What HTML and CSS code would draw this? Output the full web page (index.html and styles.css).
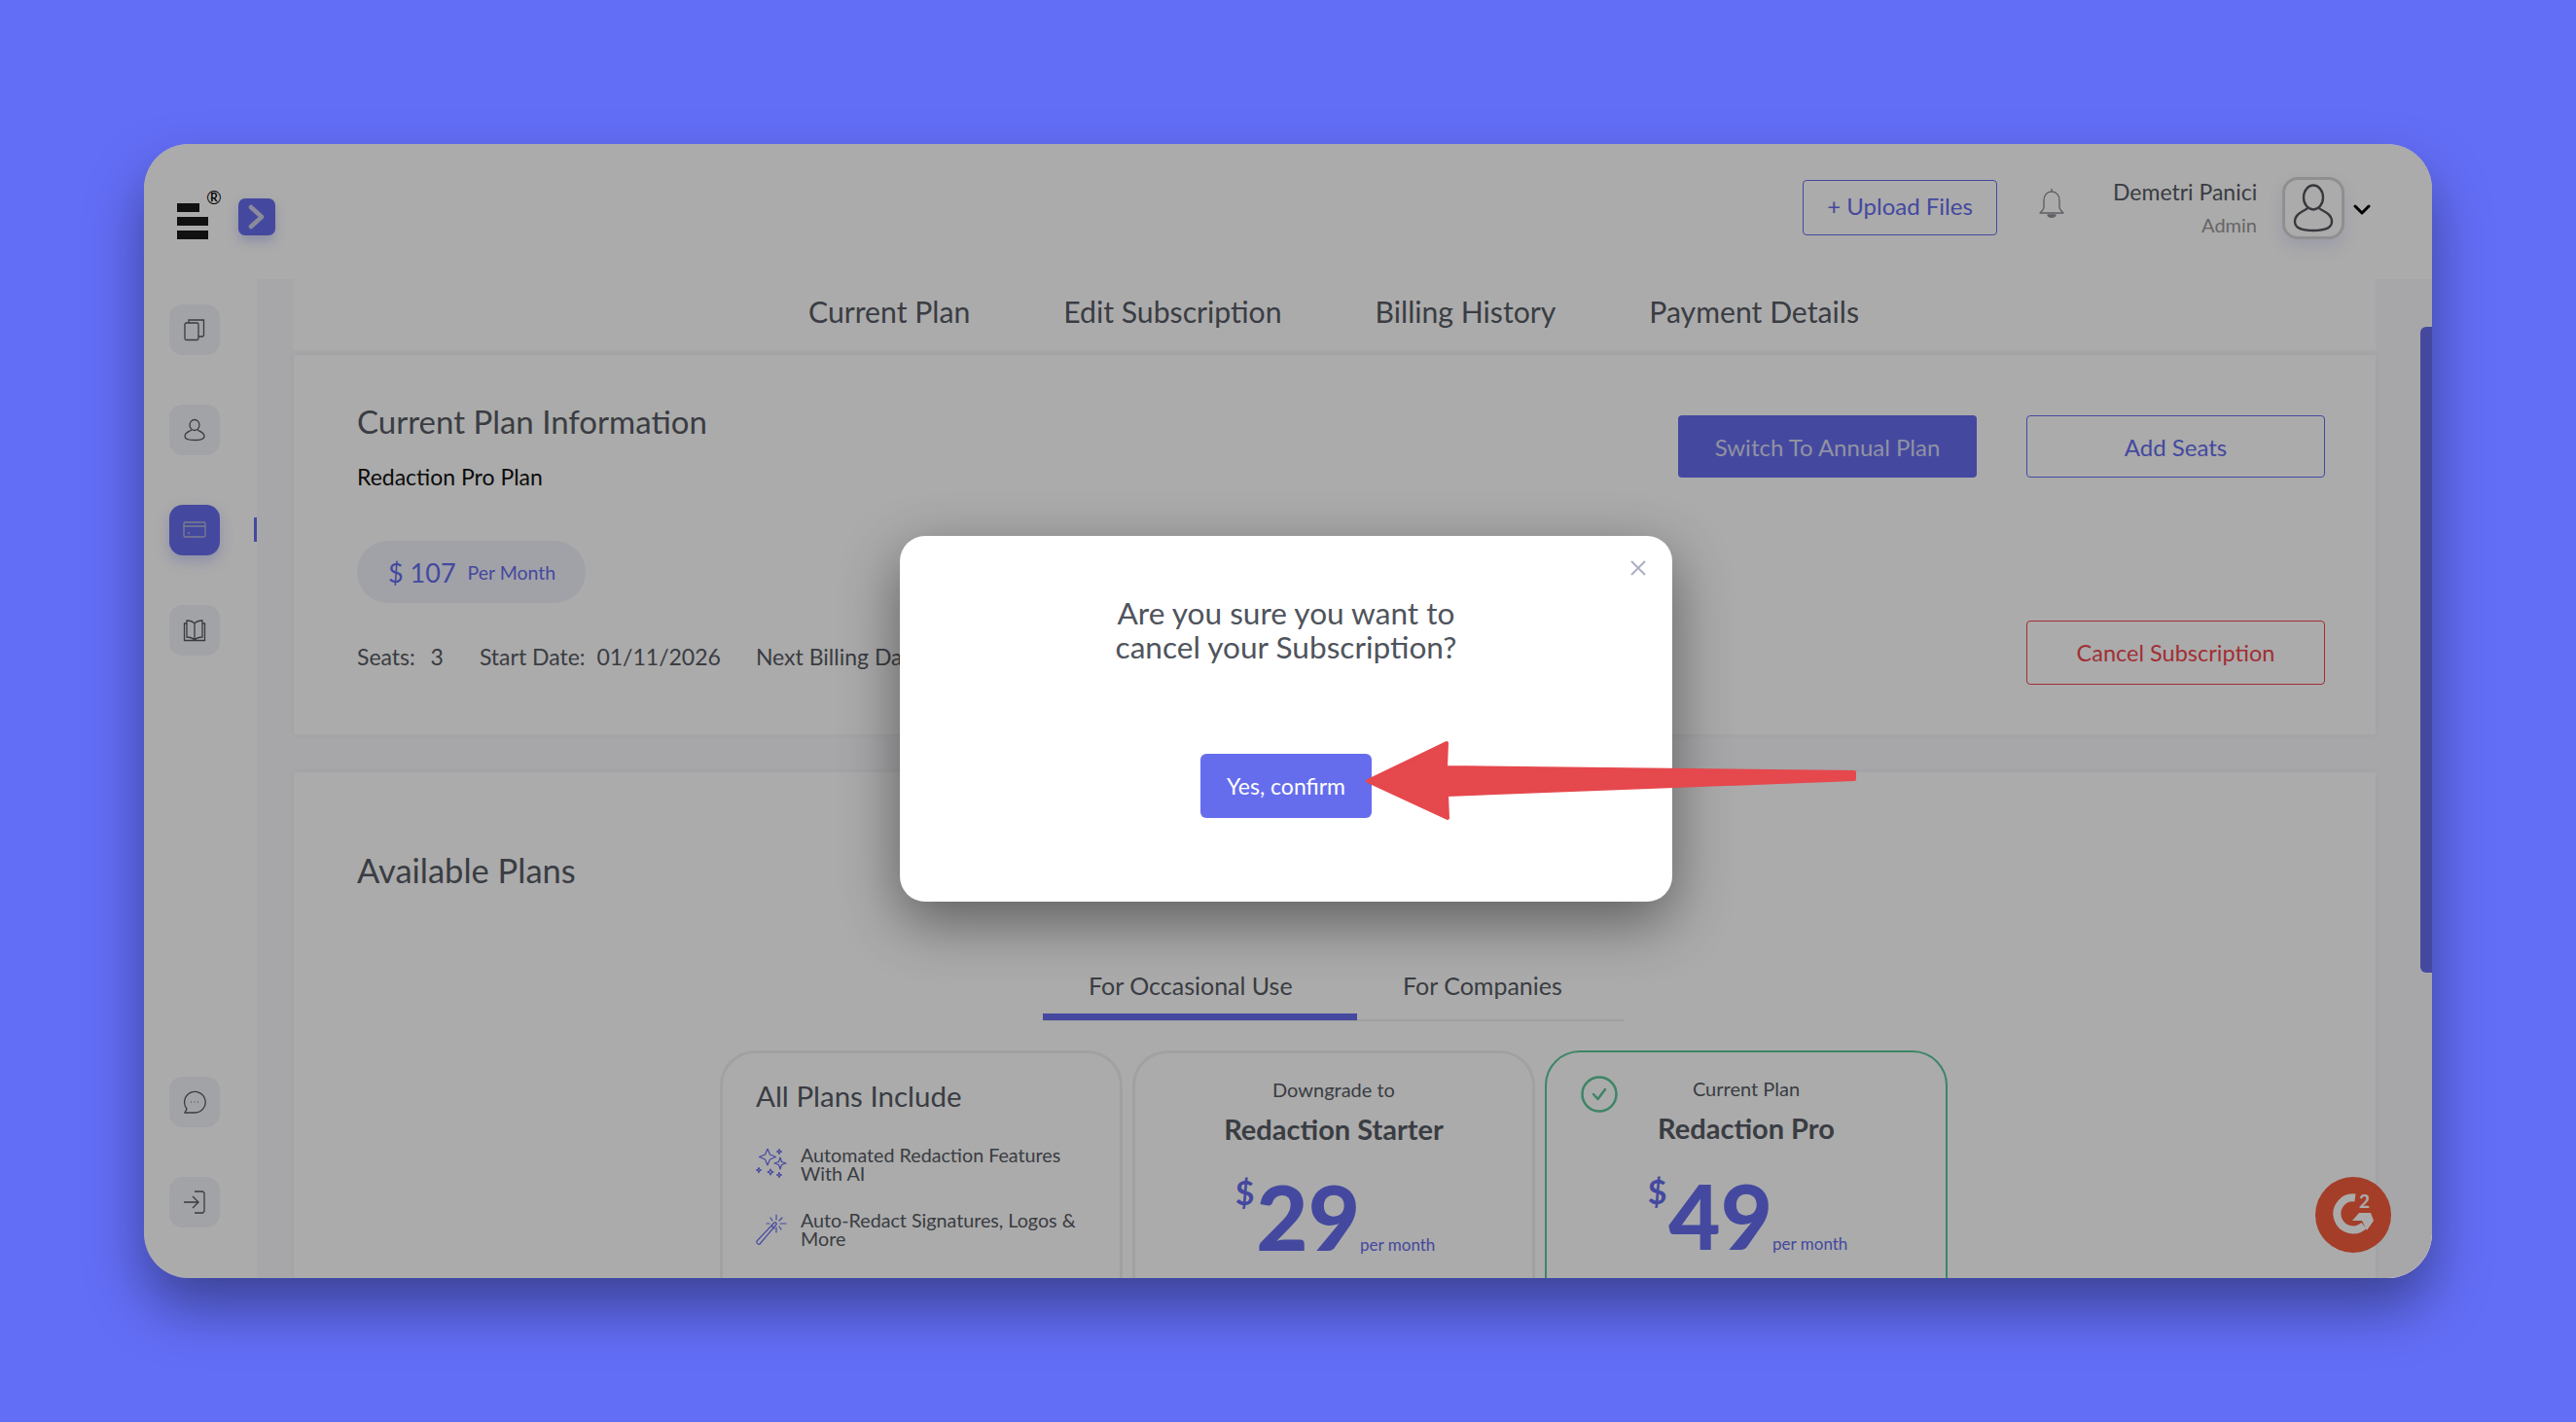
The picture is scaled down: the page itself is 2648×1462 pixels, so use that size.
FILE: index.html
```html
<!DOCTYPE html>
<html lang="en">
<head>
    <meta charset="UTF-8">
    <title>Subscription</title>
    <link rel="stylesheet" href="styles.css">
</head>
<body>
    <div class="window">
        <header class="topbar">
            <div class="brand">
                <div class="logo">
                    <span class="logo-reg">®</span>
                    <span class="logo-bar short"></span>
                    <span class="logo-bar"></span>
                    <span class="logo-bar"></span>
                </div>
                <button class="expand-btn">
                    <svg width="22" height="26" viewBox="0 0 22 26" fill="none" stroke="#cfcfe6" stroke-width="4.5" stroke-linecap="round" stroke-linejoin="round"><path d="M5 3l11 10L5 23"/></svg>
                </button>
            </div>
            <div class="top-actions">
                <button class="btn-outline upload-btn">+ Upload Files</button>
                <svg class="bell" width="28" height="34" viewBox="0 0 28 34" fill="none" stroke="#8e9097" stroke-width="1.4" stroke-linejoin="round"><path d="M14 1v3M14 4c-5 0-8 4-8 9v7c0 2-2 4-4 6h24c-2-2-4-4-4-6v-7c0-5-3-9-8-9z"/><path d="M10 28c1 3 7 3 8 0z" fill="#8e9097"/></svg>
                <div class="user-info">
                    <div class="user-name">Demetri Panici</div>
                    <div class="user-role">Admin</div>
                </div>
                <div class="avatar">
                    <svg width="44" height="50" viewBox="0 0 44 50" fill="none" stroke="#52555c" stroke-width="2.4"><ellipse cx="22" cy="14" rx="10" ry="12.5"/><path d="M16 25c-3 3-13 5-13 14 0 7 9 9 19 9s19-2 19-9c0-9-10-11-13-14"/></svg>
                </div>
                <svg class="caret" width="18" height="11" viewBox="0 0 18 11" fill="none" stroke="#000" stroke-width="3" stroke-linecap="round" stroke-linejoin="round"><path d="M2 2l7 7 7-7"/></svg>
            </div>
        </header>

        <div class="app-body">
            <aside class="sidebar">
                <div class="side-group">
                    <div class="side-btn">
                        <svg width="24" height="24" viewBox="0 0 24 24" fill="none" stroke="#55585f" stroke-width="1.3"><rect x="2" y="5" width="14" height="17.5" rx="1.5"/><path d="M6 5V2h15.5v15.5l-1 1.5h-4.5"/></svg>
                    </div>
                    <div class="side-btn">
                        <svg width="24" height="24" viewBox="0 0 24 24" fill="none" stroke="#55585f" stroke-width="1.3"><ellipse cx="12" cy="7" rx="5" ry="5.5"/><path d="M9 12c-2 1.500-7 2.500-7 6.500 0 3 4 4 10 4s10-1 10-4c0-4-5-5-7-6.500"/></svg>
                    </div>
                    <div class="side-btn active">
                        <svg width="24" height="20" viewBox="0 0 24 20" fill="none" stroke="#b9bbd8" stroke-width="1.3"><rect x="1" y="2" width="22" height="15" rx="1.500"/><path d="M1 6h22M5 13h2"/></svg>
                        <span class="side-marker"></span>
                    </div>
                    <div class="side-btn">
                        <svg width="24" height="24" viewBox="0 0 24 24" fill="none" stroke="#55585f" stroke-width="1.3"><path d="M4 2c3 0 6 1 8 3 2-2 5-3 8-3v17c-3 0-6 1-8 3-2-2-5-3-8-3zM12 5v17M4 5H1.500v17.500h21V5H20"/></svg>
                    </div>
                </div>
                <div class="side-group">
                    <div class="side-btn">
                        <svg width="24" height="24" viewBox="0 0 24 24" fill="none" stroke="#55585f" stroke-width="1.3"><path d="M2 23l2-4A10.800 10.800 0 1 1 12 23z"/><path d="M8 12h.6M11.700 12h.6M15.400 12h.6"/></svg>
                    </div>
                    <div class="side-btn">
                        <svg width="24" height="24" viewBox="0 0 24 24" fill="none" stroke="#55585f" stroke-width="1.3"><path d="M1 12h15M10 6l6 6-6 6M12 1h8.500l1.500 1.500v19l-1.500 1.500H12"/></svg>
                    </div>
                </div>
            </aside>

            <main class="content">
                <nav class="page-tabs">
                    <span>Current Plan</span>
                    <span>Edit Subscription</span>
                    <span>Billing History</span>
                    <span>Payment Details</span>
                </nav>

                <section class="card plan-info">
                    <div class="plan-left">
                        <h2 class="card-title">Current Plan Information</h2>
                        <p class="plan-name">Redaction Pro Plan</p>
                        <div class="price-pill"><span class="pill-amount">$ 107</span><span class="pill-period">Per Month</span></div>
                        <div class="plan-meta">
                            <span class="meta-seats">Seats:&nbsp; 3</span>
                            <span>Start Date:&nbsp; 01/11/2026</span>
                            <span>Next Billing Date:&nbsp; 02/11/2026</span>
                        </div>
                    </div>
                    <div class="plan-right">
                        <div class="plan-buttons">
                            <button class="btn-solid">Switch To Annual Plan</button>
                            <button class="btn-outline">Add Seats</button>
                        </div>
                        <button class="btn-danger">Cancel Subscription</button>
                    </div>
                </section>

                <section class="card plans">
                    <h2 class="card-title plans-title">Available Plans</h2>
                    <div class="plan-tabs">
                        <span class="plan-tab selected">For Occasional Use</span>
                        <span class="plan-tab">For Companies</span>
                    </div>
                    <div class="plan-grid">
                        <div class="plan-card includes">
                            <h3>All Plans Include</h3>
                            <div class="feature">
                                <svg width="32" height="32" viewBox="0 0 32 32" fill="none" stroke="#666ded" stroke-width="1.200" stroke-linejoin="round"><path d="M12 0l2.500 6 6 2.500-6 2.500L12 17l-2.500-6-6-2.500 6-2.500zM25 9l1.500 4.500L31 15l-4.500 1.500L25 21l-1.500-4.500L19 15l4.500-1.500zM24 .5l.7 1.800 1.800.7-1.800.7-.7 1.800-.7-1.800-1.800-.7 1.800-.7zM3 19.500l.7 1.800 1.800.7-1.800.7-.7 1.800-.7-1.800L.5 22l1.800-.7zM15 21l.9 2.100 2.100.9-2.100.9-.9 2.100-.9-2.100L12 24l2.100-.9zM24 24.500l.7 1.800 1.800.7-1.800.7-.7 1.800-.7-1.800-1.800-.7 1.800-.7z"/></svg>
                                <span>Automated Redaction Features With AI</span>
                            </div>
                            <div class="feature">
                                <svg width="32" height="32" viewBox="0 0 32 32" fill="none" stroke="#666ded" stroke-width="1.200" stroke-linecap="round"><path d="M1 28L19 9c1-1 3 1 2 2L4 31c-1 1-4-1-3-3zM16 12l3 3M21 1v5M21 14v5M25 10h6M11 10h3M27 4l-3 3M15 4l2 3M26 16l-2-3"/></svg>
                                <span>Auto-Redact Signatures, Logos &amp; More</span>
                            </div>
                        </div>
                        <div class="plan-card tier">
                            <p class="tier-label">Downgrade to</p>
                            <h3 class="tier-name">Redaction Starter</h3>
                            <div class="tier-price"><span class="dollar">$</span><span class="amount">29</span><span class="period">per month</span></div>
                        </div>
                        <div class="plan-card tier current">
                            <svg class="tier-check" width="38" height="38" viewBox="0 0 38 38" fill="none" stroke="#5cc69a" stroke-width="2.500" stroke-linecap="round" stroke-linejoin="round"><circle cx="19" cy="19" r="17.500"/><path d="M13 19l4.500 5L25 14"/></svg>
                            <p class="tier-label">Current Plan</p>
                            <h3 class="tier-name">Redaction Pro</h3>
                            <div class="tier-price"><span class="dollar">$</span><span class="amount">49</span><span class="period">per month</span></div>
                        </div>
                    </div>
                </section>
            </main>
        </div>

        <span class="scroll-thumb"></span>

        <div class="g2-badge">
            <svg width="78" height="78" viewBox="0 0 78 78"><circle cx="39" cy="39" r="39" fill="#f55d3d"/><path d="M41 21.500A16.500 16.500 0 1 0 50 50" fill="none" stroke="#fff" stroke-width="8"/><path d="M45 37h12l3 8-7 10-5-10H38z" fill="#fff"/></svg>
            <span class="g2-two">2</span>
        </div>

        <div class="overlay">
            <div class="modal">
                <svg class="modal-close" width="18" height="18" viewBox="0 0 18 18" fill="none" stroke="#a9b1c2" stroke-width="2"><path d="M2 2l14 14M16 2L2 16"/></svg>
                <p class="modal-text">Are you sure you want to<br>cancel your Subscription?</p>
                <button class="btn-confirm">Yes, confirm</button>
            </div>
        </div>

        <svg class="arrow" width="520" height="100" viewBox="0 0 520 100"><polygon points="13,50 94,11 93,36 513,41 513,48 94,64 95,88" fill="#e5484d" stroke="#e5484d" stroke-width="4" stroke-linejoin="round"/></svg>
    </div>
</body>
</html>
```

FILE: styles.css
```css
* {
    box-sizing: border-box;
}

body {
    margin: 0;
    width: 2648px;
    height: 1462px;
    padding: 148px;
    overflow: hidden;
    background: #636ef7;
    font-family: 'Lato', 'Open Sans', sans-serif;
    color: #575b64;
}

p, h2, h3 {
    margin: 0;
    font-weight: 400;
}

button {
    font-family: inherit;
}

.window {
    position: relative;
    width: 2352px;
    height: 1166px;
    border-radius: 46px;
    box-shadow: 0 30px 60px rgba(0,0,0,0.4);
    background: #fff;
    overflow: hidden;
    display: flex;
    flex-direction: column;
}

/* top bar */
.topbar {
    height: 139px;
    flex-shrink: 0;
    display: flex;
    justify-content: space-between;
    padding: 34px 63px 0 34px;
}

.brand {
    display: flex;
    align-items: flex-start;
    gap: 31px;
    padding-top: 22px;
}

.logo {
    position: relative;
    width: 32px;
    padding-top: 5px;
    display: flex;
    flex-direction: column;
    gap: 5px;
}

.logo-bar {
    height: 9px;
    background: #1a1a1a;
}

.logo-bar.short {
    width: 23px;
}

.logo-reg {
    position: absolute;
    left: 30px;
    top: -13px;
    font-size: 19px;
    color: #000;
}

.expand-btn {
    width: 38px;
    height: 38px;
    padding: 0;
    border: 0;
    border-radius: 7px;
    background: #666ded;
    display: flex;
    align-items: center;
    justify-content: center;
    box-shadow: 0 6px 12px rgba(102,109,237,0.3);
}

.top-actions {
    display: flex;
    align-items: flex-start;
}

.btn-outline {
    border: 1px solid #666ded;
    border-radius: 4px;
    background: #fff;
    color: #666ded;
    font-size: 24px;
    height: 64px;
    width: 307px;
}

.upload-btn {
    width: 200px;
    height: 57px;
    margin-top: 3px;
    padding-bottom: 5px;
}

.bell {
    margin: 11px 0 0 42px;
}

.user-info {
    margin-left: 49px;
    width: 148px;
    text-align: right;
}

.user-name {
    font-size: 23px;
    line-height: 30px;
    white-space: nowrap;
}

.user-role {
    font-size: 20px;
    line-height: 26px;
    margin-top: 6px;
    color: #999;
}

.avatar {
    width: 64px;
    height: 64px;
    margin-left: 26px;
    border: 3px solid #d5d5d5;
    border-radius: 16px;
    background: #fff;
    display: flex;
    align-items: center;
    justify-content: center;
    box-shadow: 0 8px 16px rgba(102,109,237,0.15);
}

.caret {
    margin: 28px 0 0 9px;
}

/* sidebar */
.app-body {
    flex: 1;
    min-height: 0;
    display: flex;
}

.sidebar {
    width: 116px;
    flex-shrink: 0;
    padding: 26px 0 52px 26px;
    display: flex;
    flex-direction: column;
    justify-content: space-between;
}

.side-group {
    display: flex;
    flex-direction: column;
    gap: 51px;
}

.side-btn {
    position: relative;
    width: 52px;
    height: 52px;
    border-radius: 14px;
    background: #f2f3f8;
    display: flex;
    align-items: center;
    justify-content: center;
}

.side-btn.active {
    background: #666ded;
    box-shadow: 0 6px 14px rgba(102,109,237,0.3);
}

.side-marker {
    position: absolute;
    left: 87px;
    top: 13px;
    width: 3px;
    height: 25px;
    background: #666ded;
}

/* main area */
.content {
    flex: 1;
    min-width: 0;
    padding: 0 58px 0 38px;
    background: #f9f9fc;
    display: flex;
    flex-direction: column;
}

.page-tabs {
    height: 73px;
    flex-shrink: 0;
    margin-bottom: 5px;
    background: #fff;
    padding: 0 0 8px 529px;
    display: flex;
    align-items: center;
    gap: 96px;
    font-size: 30.2px;
}

.card {
    background: #fff;
    box-shadow: 0 0 6px rgba(60,60,110,0.05);
}

.card-title {
    font-size: 33px;
    line-height: 40px;
}

.plans-title {
    font-size: 34.5px;
}

.plan-info {
    height: 390px;
    flex-shrink: 0;
    margin-bottom: 39px;
    padding: 48px 52px 51px 65px;
    display: flex;
    justify-content: space-between;
}

.plan-name {
    font-size: 23px;
    line-height: 28px;
    margin-top: 23px;
    color: #111;
}

.price-pill {
    width: 235px;
    height: 64px;
    margin-top: 52px;
    padding-left: 32px;
    border-radius: 32px;
    background: #f1f2fb;
    color: #666ded;
    display: flex;
    align-items: center;
    gap: 12px;
}

.pill-amount {
    font-size: 27px;
}

.pill-period {
    font-size: 19.5px;
}

.plan-meta {
    margin-top: 40px;
    display: flex;
    gap: 36px;
    font-size: 23px;
    line-height: 30px;
}

.meta-seats {
    word-spacing: 2px;
    margin-right: 1px;
}

.plan-right {
    padding-top: 14px;
    display: flex;
    flex-direction: column;
    justify-content: space-between;
    align-items: flex-end;
}

.plan-buttons {
    display: flex;
    gap: 51px;
}

.btn-solid {
    width: 307px;
    height: 64px;
    border: 0;
    border-radius: 4px;
    background: #666ded;
    color: #d8d9f3;
    font-size: 24px;
}

.btn-danger {
    width: 307px;
    height: 66px;
    border: 1px solid #f0474f;
    border-radius: 4px;
    background: #fff;
    color: #f0474f;
    font-size: 23.5px;
}

/* available plans */
.plans {
    flex: 1;
    min-height: 0;
    padding: 81px 0 0 65px;
    position: relative;
}

.plan-tabs {
    margin: 79px 0 0 705px;
    width: 598px;
    height: 56px;
    border-bottom: 2px solid #efefef;
    display: flex;
    font-size: 25px;
}

.plan-tab {
    height: 55px;
    padding: 0 47px;
    line-height: 39px;
    white-space: nowrap;
}

.plan-tab.selected {
    width: 323px;
    border-bottom: 7px solid #666ded;
}

.plan-grid {
    margin: 30px 0 0 373px;
    display: flex;
    gap: 10px;
}

.plan-card {
    position: relative;
    width: 414px;
    height: 300px;
    border: 3px solid #f0f0f0;
    border-radius: 36px;
}

.includes {
    padding: 26px 32px 26px 34px;
}

.includes h3 {
    font-size: 29.5px;
    line-height: 36px;
    margin-bottom: 33px;
}

.feature {
    display: flex;
    align-items: center;
    gap: 14px;
    font-size: 19.7px;
    line-height: 19px;
    margin-bottom: 29px;
}

.feature svg {
    flex-shrink: 0;
}

.tier {
    text-align: center;
    padding-top: 24px;
}

.tier.current {
    border: 2px solid #5cc69a;
}

.tier-check {
    position: absolute;
    left: 35px;
    top: 24px;
}

.tier-label {
    font-size: 20px;
    line-height: 26px;
}

.tier-name {
    font-size: 29px;
    line-height: 36px;
    font-weight: 700;
    margin-top: 10px;
}

.tier-price {
    display: flex;
    justify-content: center;
    align-items: flex-start;
    color: #666ded;
    margin-top: 22px;
    padding-left: 3px;
}

.dollar {
    font-size: 34px;
    font-weight: 700;
    line-height: 40px;
    margin: 5px 2px 0 0;
}

.amount {
    font-size: 92px;
    font-weight: 900;
    line-height: 92px;
    margin-top: 4px;
}

.period {
    font-size: 17px;
    line-height: 22px;
    margin: 68px 0 0 0;
}

.scroll-thumb {
    position: absolute;
    right: 0;
    top: 188px;
    width: 12px;
    height: 664px;
    border-radius: 6px 0 0 6px;
    background: #666ded;
}

.g2-badge {
    position: absolute;
    left: 2232px;
    top: 1062px;
    width: 78px;
    height: 78px;
}

.g2-two {
    position: absolute;
    left: 45px;
    top: 15px;
    font-size: 19px;
    line-height: 19px;
    font-weight: 700;
    color: #fff;
}

/* confirm dialog */
.overlay {
    position: absolute;
    inset: 0;
    background: rgba(0,0,0,0.33);
    display: flex;
    align-items: center;
    justify-content: center;
    padding: 16px 4px 0 0;
}

.modal {
    position: relative;
    width: 794px;
    height: 376px;
    border-radius: 26px;
    background: #fff;
    box-shadow: 0 20px 60px rgba(0,0,0,0.45);
    display: flex;
    flex-direction: column;
    align-items: center;
    padding-top: 62px;
}

.modal-close {
    position: absolute;
    right: 26px;
    top: 24px;
}

.modal-text {
    font-size: 31.6px;
    line-height: 35px;
    text-align: center;
    color: #4f545c;
}

.btn-confirm {
    width: 176px;
    height: 66px;
    margin-top: 92px;
    border: 0;
    border-radius: 6px;
    background: #666ded;
    color: #fff;
    font-size: 23px;
}

.arrow {
    position: absolute;
    left: 1245px;
    top: 605px;
}
```
